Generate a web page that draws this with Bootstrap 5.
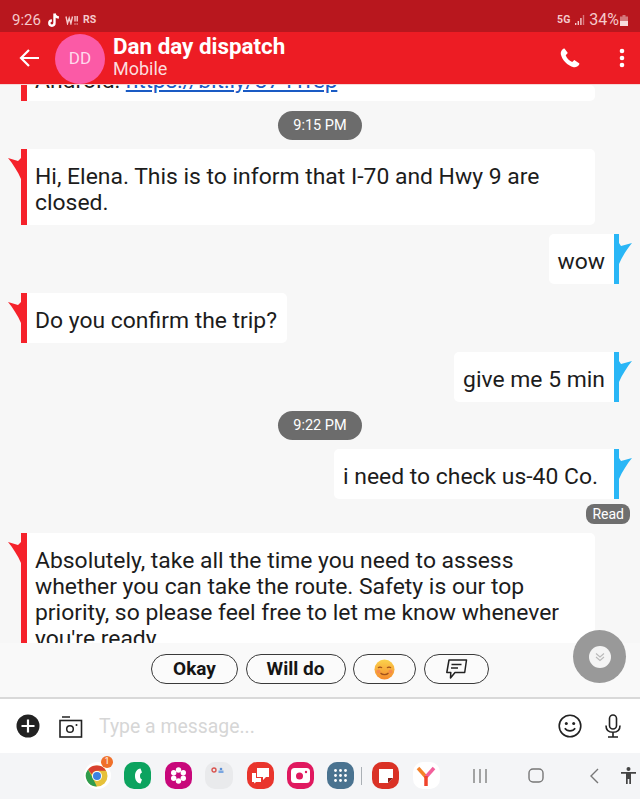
<!DOCTYPE html>
<html lang="en">
<head>
  <meta charset="UTF-8" />
  <meta name="viewport" content="width=device-width, initial-scale=1.0"/>
  <title>Dan day dispatch</title>
  <link href="https://cdn.jsdelivr.net/npm/bootstrap@5.3.2/dist/css/bootstrap.min.css" rel="stylesheet" />
  <style>
    body {
      font-family: Roboto, "Liberation Sans", sans-serif;
      background: #f7f7f7;
      color: #1c1c1c;
      height: 799px;
      overflow: hidden;
    }

    /* top bars */
    .status-strip {
      height: 32px;
      background: #b8171e;
      color: #f5c9cb;
      font-size: 15px;
      padding: 8px 11px 0 12px;
      flex: none;
    }
    .status-tag { font-size: 10.5px; font-weight: 700; }
    .chat-head {
      height: 53px;
      background: #ed1c24;
      color: #fff;
      padding: 0 11px 0 19px;
      flex: none;
      border-bottom: 1px solid #f6d7d8;
    }
    .head-avatar {
      width: 50px;
      height: 50px;
      border-radius: 50%;
      background: #fb5aa6;
      color: #ffd9ec;
      font-size: 17px;
      margin: 2px 8px 0 16px;
      flex: none;
    }
    .head-text { margin-bottom: 4px; }
    .head-name { font-size: 22.4px; font-weight: 700; line-height: 24px; }
    .head-sub { font-size: 18px; line-height: 21px; color: #fbdcdd; }

    /* message list */
    .chat-scroll {
      height: 558px;
      overflow: hidden;
      flex: none;
    }
    .msg-row { display: flex; position: relative; }
    .msg-in { padding-left: 21px; padding-right: 45px; }
    .msg-out { justify-content: flex-end; padding-right: 21px; }
    .msg-bubble {
      background: #fff;
      font-size: 22.9px;
      line-height: 26px;
      padding: 15px 9px 9px 9px;
      border-radius: 0 5px 5px 0;
    }
    .msg-in .msg-bubble { border-left: 6px solid #f5222b; flex: 0 1 auto; padding-left: 8px; padding-right: 10px; }
    .msg-out .msg-bubble {
      border-right: 5px solid #29b6f6;
      border-radius: 5px 0 0 5px;
      padding-right: 9px;
    }
    .msg-out .bubble-wide { padding-right: 16px; }
    .msg-tail { position: absolute; top: 8px; width: 14px; height: 22px; }
    .msg-in .msg-tail { left: 8px; }
    .msg-out .msg-tail { right: 8px; }
    .msg-in .bubble-cut { height: 16px; overflow: hidden; padding: 0 8px; }
    .bubble-cut div { margin-top: -17px; }
    .bubble-cut a { color: #1a5bc4; letter-spacing: -.2px; }
    .time-pill {
      background: #6c6c6c;
      color: #fff;
      font-size: 14.5px;
      height: 29px;
      line-height: 30px;
      border-radius: 15px;
      padding: 0 15px;
    }
    .read-pill {
      background: #6f6f6f;
      color: #fff;
      font-size: 14px;
      height: 20px;
      line-height: 20px;
      border-radius: 8px;
      padding: 0 6px;
    }

    /* suggested replies */
    .reply-strip { height: 54px; flex: none; padding: 11px 0 0 151px; gap: 7.5px; background: #f9f9f9; }
    .reply-chip {
      height: 30px;
      border: 1.5px solid #3a3a3a;
      border-radius: 15px;
      background: #fbfbfb;
      font-size: 19px;
      line-height: 26px;
      font-weight: 700;
      color: #151515;
      padding: 0;
    }
    .scroll-fab {
      position: absolute;
      left: 573px;
      top: 630px;
      width: 53px;
      height: 53px;
      border-radius: 50%;
      background: #999;
    }
    .fab-core { width: 22px; height: 22px; border-radius: 50%; background: #f4f4f4; }

    /* composer */
    .composer {
      height: 56px;
      flex: none;
      background: #fff;
      border-top: 2px solid #d9d9d9;
      padding: 0 19px 0 16px;
    }
    .type-hint { font-size: 19.4px; color: #d6d6d6; margin-left: 16px; padding-top: 1px; }

    /* bottom dock */
    .dock {
      height: 46px;
      flex: none;
      background: #f4f5f7;
      padding: 0 4px 1px 84px;
    }
    .dock-app {
      width: 27px;
      height: 27px;
      border-radius: 10px;
      flex: none;
      margin-right: 13.4px;
    }
    .dock-line { width: 1px; height: 18px; background: #aab0b5; margin: 0 10px 0 -2px; }
  </style>
</head>
<body class="d-flex flex-column position-relative">

  <!-- Status bar -->
  <div class="status-strip d-flex align-items-center">
    <span>9:26</span>
    <svg style="margin-left:6px" width="14" height="17" viewBox="0 0 14 16"><path d="M7.500 1v9.600a2.600 2.600 0 1 1-2.600-2.600M7.500 1c.3 2.400 1.800 3.800 4.400 4" fill="none" stroke="#fff" stroke-width="2.400"/></svg>
    <svg style="margin-left:4px" width="13" height="10" viewBox="0 0 13 10"><path d="M1 1.500 2.500 8.500 4.200 3l1.700 5.500L7.500 1.500M10 1v5.500M12.200 1v5.500M10 8.500v1M12.200 8.500v1" fill="none" stroke="#f5c9cb" stroke-width="1.400"/></svg>
    <span class="status-tag" style="margin-left:5px">RS</span>
    <span class="ms-auto status-tag">5G</span>
    <svg class="ms-1" width="11" height="12" viewBox="0 0 11 12"><path d="M1 9h1.400v2H1zM3.600 7H5v4H3.600zM6.200 4h1.400v7H6.200z" fill="#f5c9cb"/><path d="M8.800 1h1.400v10H8.800z" fill="#d4777b"/></svg>
    <span class="ms-1" style="font-size:16px">34%</span>
    <svg width="10" height="13" viewBox="0 0 10 13"><path d="M3.500 1h3v1.500H9V12H1V2.500h2.500z" fill="#d4777b"/><path d="M1 7h8v5H1z" fill="#f8dcdd"/></svg>
  </div>

  <!-- Header -->
  <div class="chat-head d-flex align-items-center">
    <svg width="20" height="18" viewBox="0 0 20 18"><path d="M20 9H2M10 1 2 9l8 8" fill="none" stroke="#fff" stroke-width="2.200"/></svg>
    <div class="head-avatar d-flex align-items-center justify-content-center">DD</div>
    <div class="head-text flex-grow-1">
      <div class="head-name">Dan day dispatch</div>
      <div class="head-sub">Mobile</div>
    </div>
    <svg style="margin-right:39px" width="20" height="20" viewBox="0 0 20 20"><path d="M4.500.5 7.800 5 5.700 7.300c.9 2.800 3.400 5.500 6.500 6.800l2.100-2 4.800 3.200c.4.300.4.800.1 1.200-1.300 2-3.400 3.200-5.500 2.700C7.500 17.600 2 11.800.8 6.200.4 4 1.500 2 3.400.7c.4-.3.800-.4 1.100-.2z" fill="#fff"/></svg>
    <svg class="me-1" width="6" height="20" viewBox="0 0 6 20"><circle cx="3" cy="3" r="2.300" fill="#fff"/><circle cx="3" cy="10" r="2.300" fill="#fff"/><circle cx="3" cy="17" r="2.300" fill="#fff"/></svg>
  </div>

  <!-- Messages -->
  <div class="chat-scroll">
    <div class="msg-row msg-in">
      <div class="msg-bubble bubble-cut flex-grow-1"><div>Android: <a href="#">https://bit.ly/3741rep</a></div></div>
    </div>

    <div class="d-flex justify-content-center" style="margin:10px 0 9px"><span class="time-pill">9:15 PM</span></div>

    <div class="msg-row msg-in">
      <svg class="msg-tail" viewBox="0 0 14 22"><path d="M0 1 10 4l3-3v21C10 15 5 7 0 1z" fill="#f5222b"/></svg>
      <div class="msg-bubble">Hi, Elena. This is to inform that I-70 and Hwy 9 are closed.</div>
    </div>

    <div class="msg-row msg-out" style="margin-top:9px">
      <svg class="msg-tail" viewBox="0 0 14 22"><path d="M14 1 3 4 1 1v21C4 15 9 7 14 1z" fill="#29b6f6"/></svg>
      <div class="msg-bubble">wow</div>
    </div>

    <div class="msg-row msg-in" style="margin-top:9px">
      <svg class="msg-tail" viewBox="0 0 14 22"><path d="M0 1 10 4l3-3v21C10 15 5 7 0 1z" fill="#f5222b"/></svg>
      <div class="msg-bubble">Do you confirm the trip?</div>
    </div>

    <div class="msg-row msg-out" style="margin-top:9px">
      <svg class="msg-tail" viewBox="0 0 14 22"><path d="M14 1 3 4 1 1v21C4 15 9 7 14 1z" fill="#29b6f6"/></svg>
      <div class="msg-bubble">give me 5 min</div>
    </div>

    <div class="d-flex justify-content-center" style="margin:9px 0"><span class="time-pill">9:22 PM</span></div>

    <div class="msg-row msg-out">
      <svg class="msg-tail" viewBox="0 0 14 22"><path d="M14 1 3 4 1 1v21C4 15 9 7 14 1z" fill="#29b6f6"/></svg>
      <div class="msg-bubble bubble-wide">i need to check us-40 Co.</div>
    </div>

    <div class="d-flex justify-content-end" style="margin:5px 10px 9px 0"><span class="read-pill">Read</span></div>

    <div class="msg-row msg-in">
      <svg class="msg-tail" viewBox="0 0 14 22"><path d="M0 1 10 4l3-3v21C10 15 5 7 0 1z" fill="#f5222b"/></svg>
      <div class="msg-bubble">Absolutely, take all the time you need to assess whether you can take the route. Safety is our top priority, so please feel free to let me know whenever you're ready.</div>
    </div>
  </div>

  <!-- Suggested replies -->
  <div class="reply-strip d-flex align-items-start">
    <button class="reply-chip btn" style="width:87px">Okay</button>
    <button class="reply-chip btn" style="width:100px">Will do</button>
    <button class="reply-chip btn d-flex align-items-center justify-content-center" style="width:63px">
      <svg width="21" height="21" viewBox="0 0 21 21"><defs><linearGradient id="emo" x1="0" y1="0" x2="0" y2="1"><stop offset="0" stop-color="#fbd34c"/><stop offset="1" stop-color="#f58a2c"/></linearGradient></defs><circle cx="10.500" cy="10.500" r="10" fill="url(#emo)"/><path d="M4 9c1-1.300 3-1.300 4 0M13 9c1-1.300 3-1.300 4 0M6.500 14c2 2.200 6 2.200 8 0" fill="none" stroke="#a3521c" stroke-width="1.200"/><circle cx="4.500" cy="12.500" r="2" fill="#f4745c" opacity=".55"/><circle cx="16.500" cy="12.500" r="2" fill="#f4745c" opacity=".55"/></svg>
    </button>
    <button class="reply-chip btn d-flex align-items-center justify-content-center" style="width:65px">
      <svg width="23" height="22" viewBox="0 0 23 22"><path d="M4 2h17.500l-1.800 12.500H10L5.500 20l.3-5.500H1.800z" fill="none" stroke="#222" stroke-width="1.500" stroke-linejoin="round"/><path d="M6.500 6.500h10M6 10h7" stroke="#222" stroke-width="1.500"/></svg>
    </button>
  </div>

  <div class="scroll-fab d-flex align-items-center justify-content-center">
    <div class="fab-core d-flex align-items-center justify-content-center">
      <svg width="10" height="10" viewBox="0 0 10 10"><path d="M1 1.500 5 5l4-3.500M1 5l4 3.500L9 5" fill="none" stroke="#b9b9b9" stroke-width="1.100"/></svg>
    </div>
  </div>

  <!-- Composer -->
  <div class="composer d-flex align-items-center">
    <svg width="24" height="24" viewBox="0 0 24 24"><circle cx="12" cy="12" r="11.500" fill="#222"/><path d="M12 5.500v13M5.500 12h13" stroke="#fff" stroke-width="2.200"/></svg>
    <svg style="margin-left:19px" width="24" height="24" viewBox="0 0 24 24"><path d="M3 3h8" stroke="#222" stroke-width="1.500"/><rect x="1" y="6.500" width="21.500" height="16.500" fill="none" stroke="#222" stroke-width="1.600"/><circle cx="11" cy="15" r="3.300" fill="none" stroke="#222" stroke-width="1.500"/><circle cx="17.500" cy="11" r="1" fill="#222"/></svg>
    <span class="type-hint flex-grow-1">Type a message...</span>
    <svg width="24" height="24" viewBox="0 0 24 24"><circle cx="12" cy="12" r="10.800" fill="none" stroke="#222" stroke-width="1.600"/><circle cx="8.300" cy="9.500" r="1.500" fill="#222"/><circle cx="15.700" cy="9.500" r="1.500" fill="#222"/><path d="M6.800 14.200c2.500 3.500 7.900 3.500 10.400 0" fill="none" stroke="#222" stroke-width="1.600"/></svg>
    <svg style="margin-left:23px" width="16" height="24" viewBox="0 0 16 24"><rect x="4.500" y="1" width="7" height="14" rx="3.500" fill="none" stroke="#222" stroke-width="1.600"/><path d="M1 11.500c0 4.500 3 6.800 7 6.800s7-2.300 7-6.800M8 18.300V23M3 23h10" fill="none" stroke="#222" stroke-width="1.600"/></svg>
  </div>

  <!-- Dock -->
  <div class="dock d-flex align-items-center">
    <div class="dock-app position-relative" style="background:#fff;border-radius:50%">
      <svg width="27" height="27" viewBox="0 0 27 27"><circle cx="13" cy="14" r="10.500" fill="#e6c13a"/><path d="M13 3.500a10.500 10.500 0 0 1 9.100 5.300H13a5.300 5.300 0 0 0-5 3.600L4 7.500a10.500 10.500 0 0 1 9-4z" fill="#d8402f"/><path d="M4 7.500l4.500 8 4.300 8.900A10.500 10.500 0 0 1 4 7.500z" fill="#2f9c4c"/><circle cx="13" cy="14" r="5" fill="#fff"/><circle cx="13" cy="14" r="4" fill="#3b82e0"/></svg>
      <span class="position-absolute d-flex align-items-center justify-content-center rounded-circle" style="left:17px;top:-6px;width:12px;height:12px;background:#f0702a;color:#fff;font-size:9px">1</span>
    </div>
    <div class="dock-app d-flex align-items-center justify-content-center" style="background:#0ca35f">
      <svg width="13" height="18" viewBox="0 0 13 18"><path d="M9.500 1.500C6 2 4 5 4 9s2 7 5.500 7.500l1.500-4c-1.300-.3-2-1.700-2-3.500s.7-3.200 2-3.500z" fill="#fff"/></svg>
    </div>
    <div class="dock-app d-flex align-items-center justify-content-center" style="background:#c8087b">
      <svg width="19" height="19" viewBox="0 0 19 19"><g fill="#fff"><circle cx="9.500" cy="4" r="2.700"/><circle cx="9.500" cy="15" r="2.700"/><circle cx="4.700" cy="6.800" r="2.700"/><circle cx="14.300" cy="6.800" r="2.700"/><circle cx="4.700" cy="12.200" r="2.700"/><circle cx="14.300" cy="12.200" r="2.700"/></g><circle cx="9.500" cy="9.500" r="1.600" fill="#c8087b"/></svg>
    </div>
    <div class="dock-app d-flex align-items-start" style="background:#e9eaec;padding:5px 0 0 6px;gap:2px;width:28px">
      <svg width="14" height="6" viewBox="0 0 14 6"><circle cx="3" cy="3" r="2" fill="none" stroke="#d9534f" stroke-width="1.400"/><circle cx="10" cy="2" r="1.300" fill="#5b8fd6"/><rect x="7.500" y="3.500" width="5" height="2.500" fill="#7aa6e0"/></svg>
    </div>
    <div class="dock-app d-flex align-items-center justify-content-center" style="background:#e9352d">
      <svg width="19" height="17" viewBox="0 0 19 17"><path d="M6 1h12v9h-3l-3 3v-3H6z" fill="#fff"/><path d="M1 6h4v5h5v4H5l-1.500 1.500L3 15H1z" fill="#fff"/></svg>
    </div>
    <div class="dock-app d-flex align-items-center justify-content-center" style="background:#e0195f">
      <svg width="19" height="15" viewBox="0 0 19 15"><rect width="19" height="15" rx="3.500" fill="#fff"/><circle cx="8.500" cy="8" r="3.500" fill="#e0195f"/><circle cx="15" cy="4" r="1.200" fill="#e0195f"/></svg>
    </div>
    <div class="dock-app d-flex align-items-center justify-content-center" style="background:#4a7390;margin-right:9px">
      <svg width="15" height="15" viewBox="0 0 15 15"><g fill="#fff"><circle cx="2.500" cy="2.500" r="1.400"/><circle cx="7.500" cy="2.500" r="1.400"/><circle cx="12.500" cy="2.500" r="1.400"/><circle cx="2.500" cy="7.500" r="1.400"/><circle cx="7.500" cy="7.500" r="1.400"/><circle cx="12.500" cy="7.500" r="1.400"/><circle cx="2.500" cy="12.500" r="1.400"/><circle cx="7.500" cy="12.500" r="1.400"/><circle cx="12.500" cy="12.500" r="1.400"/></g></svg>
    </div>
    <div class="dock-line"></div>
    <div class="dock-app d-flex align-items-center justify-content-center" style="background:#da3226">
      <svg width="18" height="18" viewBox="0 0 18 18"><path d="M2 2h14v9l-5 5H2z" fill="#fff"/><path d="M11 16v-5h5z" fill="#8f1d15"/></svg>
    </div>
    <div class="dock-app d-flex align-items-center justify-content-center" style="background:#fff;margin-right:32px">
      <svg width="20" height="22" viewBox="0 0 20 22"><path d="M2 3l8 9" stroke="#f5812a" stroke-width="3.500"/><path d="M18 3l-8 9" stroke="#f25f9b" stroke-width="3.500"/><path d="M10 11v10" stroke="#f0442c" stroke-width="3.500"/></svg>
    </div>
    <svg width="16" height="14" viewBox="0 0 16 14"><path d="M2 0v14M8 0v14M14 0v14" stroke="#777" stroke-width="1.300"/></svg>
    <svg style="margin-left:40px" width="16" height="15" viewBox="0 0 16 15"><rect x="1" y="1" width="14" height="13" rx="4" fill="none" stroke="#777" stroke-width="1.400"/></svg>
    <svg style="margin-left:45px" width="10" height="16" viewBox="0 0 10 16"><path d="M9 1 2 8l7 7" fill="none" stroke="#777" stroke-width="1.400"/></svg>
    <svg style="margin-left:22px" width="15" height="17" viewBox="0 0 15 17"><circle cx="7.500" cy="2" r="2" fill="#444"/><path d="M0 5h15v1.800h-5V17H8.300v-5H6.700v5H5V6.800H0z" fill="#444"/></svg>
  </div>

</body>
</html>
